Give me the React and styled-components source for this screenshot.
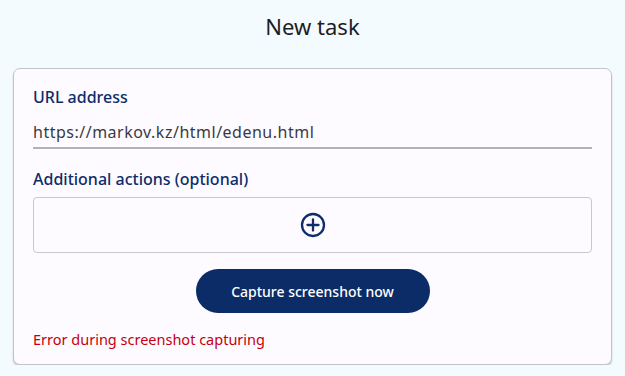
import styled, { createGlobalStyle } from 'styled-components'

const GlobalStyle = createGlobalStyle`
  html, body {
    margin: 0;
    padding: 0;
    background: #f3fbff;
    font-family: "Noto Sans", "Open Sans", sans-serif;
  }
`

const Page = styled.div`
  display: flex;
  flex-direction: column;
  align-items: center;
  padding: 11px 13px 0;
`

const Title = styled.h1`
  margin: 0 0 27px;
  font-size: 22px;
  line-height: 30px;
  font-weight: 400;
  color: #1d1d22;
`

const Card = styled.div`
  box-sizing: border-box;
  width: 100%;
  background: #fdfbff;
  border: 1px solid #c3c3ca;
  border-radius: 7px;
  box-shadow: 0 2px 2px rgba(0, 0, 0, 0.18);
  padding: 16px 19px 14px;
  display: flex;
  flex-direction: column;
`

const Label = styled.div`
  font-size: 16px;
  line-height: 24px;
  font-weight: 500;
  color: #0d2c69;
`

const UrlField = styled.div`
  margin-top: 11px;
  padding-bottom: 3px;
  border-bottom: 2px solid #b3b1b8;
  font-size: 16px;
  line-height: 24px;
  letter-spacing: 0.5px;
  color: #3a393f;
`

const Section = styled.div`
  margin-top: 18px;
`

const ActionsBox = styled.div`
  margin-top: 6px;
  height: 54px;
  border: 1px solid #c9c8cd;
  border-radius: 4px;
  display: flex;
  align-items: center;
  justify-content: center;
`

const ButtonRow = styled.div`
  display: flex;
  justify-content: center;
  margin-top: 16px;
`

const CaptureButton = styled.button`
  width: 234px;
  height: 44px;
  border: none;
  border-radius: 22px;
  background: #0b2c66;
  color: #fff;
  font-family: "Noto Sans", sans-serif;
  font-size: 14px;
  font-weight: 500;
  cursor: pointer;
`

const ErrorText = styled.div`
  margin-top: 16px;
  font-size: 14.5px;
  line-height: 21px;
  color: #c5000c;
`

const PlusIcon = () => (
  <svg width="26" height="26" viewBox="0 0 26 26" fill="none" stroke="#0d2c69" strokeWidth="2.3" strokeLinecap="round">
    <circle cx="13" cy="13" r="11" />
    <path d="M13 7.5v11M7.5 13h11" />
  </svg>
)

export default function App() {
  return (
    <Page>
      <GlobalStyle />
      <Title>New task</Title>
      <Card>
        <Label>URL address</Label>
        <UrlField>https://markov.kz/html/edenu.html</UrlField>
        <Section>
          <Label>Additional actions (optional)</Label>
          <ActionsBox>
            <PlusIcon />
          </ActionsBox>
        </Section>
        <ButtonRow>
          <CaptureButton>Capture screenshot now</CaptureButton>
        </ButtonRow>
        <ErrorText>Error during screenshot capturing</ErrorText>
      </Card>
    </Page>
  )
}
